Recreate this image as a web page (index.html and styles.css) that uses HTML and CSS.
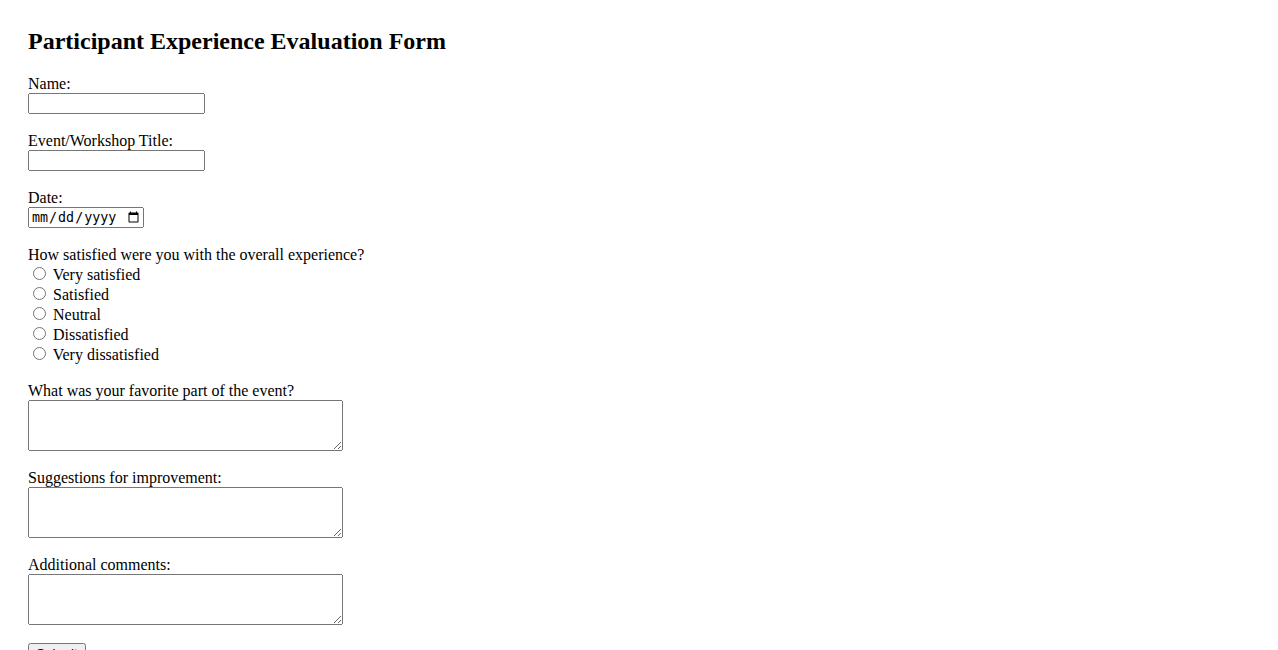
FILE: index.html
```html
<!DOCTYPE html>
<html lang="en">
<head>
<meta charset="utf-8">
<title>Participant Experience Evaluation Form</title>
<link rel="stylesheet" href="styles.css">
</head>
<body>
<div class="page">
  <h2 class="title">Participant Experience Evaluation Form</h2>
  <form class="form">
    <div class="field">
      <label class="label" for="name">Name:</label>
      <input class="text-input" type="text" id="name" name="name">
    </div>
    <div class="field">
      <label class="label" for="event">Event/Workshop Title:</label>
      <input class="text-input" type="text" id="event" name="event">
    </div>
    <div class="field">
      <label class="label" for="date">Date:</label>
      <input class="date-input" type="date" id="date" name="date">
    </div>
    <div class="field">
      <div class="label">How satisfied were you with the overall experience?</div>
      <div class="radio-row"><input type="radio" id="s1" name="sat" value="5"> <label for="s1">Very satisfied</label></div>
      <div class="radio-row"><input type="radio" id="s2" name="sat" value="4"> <label for="s2">Satisfied</label></div>
      <div class="radio-row"><input type="radio" id="s3" name="sat" value="3"> <label for="s3">Neutral</label></div>
      <div class="radio-row"><input type="radio" id="s4" name="sat" value="2"> <label for="s4">Dissatisfied</label></div>
      <div class="radio-row"><input type="radio" id="s5" name="sat" value="1"> <label for="s5">Very dissatisfied</label></div>
    </div>
    <div class="field">
      <label class="label" for="fav">What was your favorite part of the event?</label>
      <textarea class="area" id="fav" name="fav"></textarea>
    </div>
    <div class="field">
      <label class="label" for="sug">Suggestions for improvement:</label>
      <textarea class="area" id="sug" name="sug"></textarea>
    </div>
    <div class="field">
      <label class="label" for="add">Additional comments:</label>
      <textarea class="area" id="add" name="add"></textarea>
    </div>
    <button class="submit" type="submit">Submit</button>
  </form>
</div>
</body>
</html>
```

FILE: styles.css
```css
body {
  margin: 8px;
  font-family: "Liberation Serif", "Times New Roman", serif;
  font-size: 16px;
  color: #000;
  background: #fff;
}

.page {
  padding: 20px;
}

.title {
  margin: 0 0 20px;
  font-size: 24px;
  font-weight: bold;
}

.form {
  margin: 0;
}

.field {
  margin-bottom: 18px;
}

.label {
  display: block;
  line-height: 18px;
}

.text-input {
  display: block;
  box-sizing: border-box;
  width: 177px;
  height: 21px;
  margin: 0;
}

.date-input {
  display: block;
  box-sizing: border-box;
  width: 116px;
  height: 21px;
  margin: 0;
}

.radio-row {
  line-height: 18px;
}

.area {
  display: block;
  box-sizing: border-box;
  width: 315px;
  height: 51px;
  margin: 0;
}

.submit {
  box-sizing: border-box;
  min-width: 58px;
  margin: 0;
}
```
